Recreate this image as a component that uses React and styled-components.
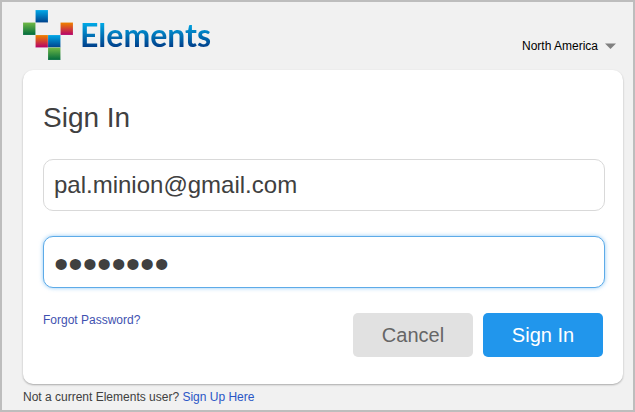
import React from "react";
import styled, { createGlobalStyle, css } from "styled-components";

const GlobalStyle = createGlobalStyle`
  *, *::before, *::after { box-sizing: border-box; }
  body {
    margin: 0;
    background: #f1f1f1;
    color: #404040;
    font-family: "Liberation Sans", Arial, Helvetica, sans-serif;
    font-size: 12px;
    line-height: 16px;
  }
`;

const Page = styled.div`
  min-height: 100vh;
  padding: 8px 10px 4px 21px;
  border: 2px solid #bdbdbd;
`;

const Header = styled.header`
  display: flex;
  justify-content: space-between;
  height: 60px;
`;

const Brand = styled.div`
  display: flex;
  align-items: flex-start;
  gap: 7px;
`;

const Mark = styled.svg`
  display: block;
  width: 50px;
  height: 50px;
`;

const Wordmark = styled.span`
  padding-top: 3px;
  font-family: Lato, "Open Sans", sans-serif;
  font-size: 32px;
  font-weight: 700;
  line-height: 44px;
  color: transparent;
  background: linear-gradient(#00aeea 12px, #003a86 38px);
  background-clip: text;
  -webkit-background-clip: text;
`;

const Region = styled.button`
  display: flex;
  align-items: center;
  align-self: flex-start;
  gap: 7px;
  margin: 28px 7px 0 0;
  padding: 0;
  border: 0;
  background: none;
  color: #000;
  font: inherit;
  cursor: pointer;
`;

const Caret = styled.svg`
  width: 11px;
  height: 6px;
  fill: #808080;
`;

const Card = styled.form`
  display: flex;
  flex-direction: column;
  padding: 32px 18px 27px 20px;
  border-radius: 10px;
  background: #fff;
  box-shadow: 0 1px 2px rgba(0, 0, 0, 0.3);
`;

const Title = styled.h1`
  margin: 0 0 25px;
  font-size: 28px;
  font-weight: 400;
  line-height: 32px;
`;

const Field = styled.input`
  width: 100%;
  height: 52px;
  margin: 0 0 25px;
  padding: 0 10px;
  border: 1px solid #d9d9d9;
  border-radius: 10px;
  outline: 0;
  background: #fff;
  color: #404040;
  font-family: inherit;
  font-size: 24px;
  ${(p) =>
    p.type === "password" &&
    css`
      padding-top: 5px;
      font-size: 41px;
    `}
  ${(p) =>
    p.$active &&
    css`
      border-color: #5dabe8;
      box-shadow: 0 0 4px rgba(70, 165, 240, 0.6);
    `}
`;

const Actions = styled.div`
  display: flex;
  align-items: flex-start;
  gap: 10px;
  padding-right: 2px;
`;

const Link = styled.a`
  color: ${(p) => (p.$muted ? "#3f51b0" : "#2a56c6")};
  text-decoration: none;
`;

const Forgot = styled.div`
  flex: 1;
  line-height: 14px;
`;

const Button = styled.button`
  width: 120px;
  height: 44px;
  padding: 0;
  border: 0;
  border-radius: 5px;
  background: ${(p) => (p.$primary ? "#2196ec" : "#e1e1e1")};
  color: ${(p) => (p.$primary ? "#fff" : "#666")};
  font-family: inherit;
  font-size: 20px;
  cursor: pointer;
`;

const Footer = styled.p`
  margin: 5px 0 0;
`;

const tiles = [
  [1, 0, "blue"],
  [0, 1, "green"],
  [3, 1, "red"],
  [1, 2, "red"],
  [2, 2, "blue"],
  [2, 3, "green"],
];

const tones = {
  blue: ["#00a4e4", "#00428c"],
  green: ["#6cb644", "#006b3d"],
  red: ["#ed7d00", "#b5006a"],
};

function LogoMark() {
  return (
    <Mark viewBox="0 0 100 100" aria-hidden="true">
      <defs>
        {Object.entries(tones).map(([name, [top, bottom]]) => (
          <linearGradient key={name} id={name} x1="0" y1="0" x2="0" y2="1">
            <stop offset="0.05" stopColor={top} />
            <stop offset="1" stopColor={bottom} />
          </linearGradient>
        ))}
      </defs>
      {tiles.map(([x, y, tone]) => (
        <rect
          key={`${x}-${y}`}
          x={x * 25}
          y={y * 25}
          width="25"
          height="25"
          fill={`url(#${tone})`}
          stroke="#f1f1f1"
          strokeOpacity="0.3"
          strokeWidth="1"
        />
      ))}
    </Mark>
  );
}

export default function App() {
  return (
    <>
      <GlobalStyle />
      <Page>
        <Header>
          <Brand>
            <LogoMark />
            <Wordmark>Elements</Wordmark>
          </Brand>
          <Region type="button" aria-haspopup="listbox">
            North America
            <Caret viewBox="0 0 11 6" aria-hidden="true">
              <path d="M0 0.5h11L5.5 6z" />
            </Caret>
          </Region>
        </Header>
        <main>
          <Card onSubmit={(e) => e.preventDefault()}>
            <Title>Sign In</Title>
            <Field type="email" aria-label="Email" defaultValue="pal.minion@gmail.com" />
            <Field type="password" aria-label="Password" defaultValue="password" $active />
            <Actions>
              <Forgot>
                <Link href="#forgot" $muted>Forgot Password?</Link>
              </Forgot>
              <Button type="button">Cancel</Button>
              <Button type="submit" $primary>Sign In</Button>
            </Actions>
          </Card>
          <Footer>
            Not a current Elements user? <Link href="#signup">Sign Up Here</Link>
          </Footer>
        </main>
      </Page>
    </>
  );
}
